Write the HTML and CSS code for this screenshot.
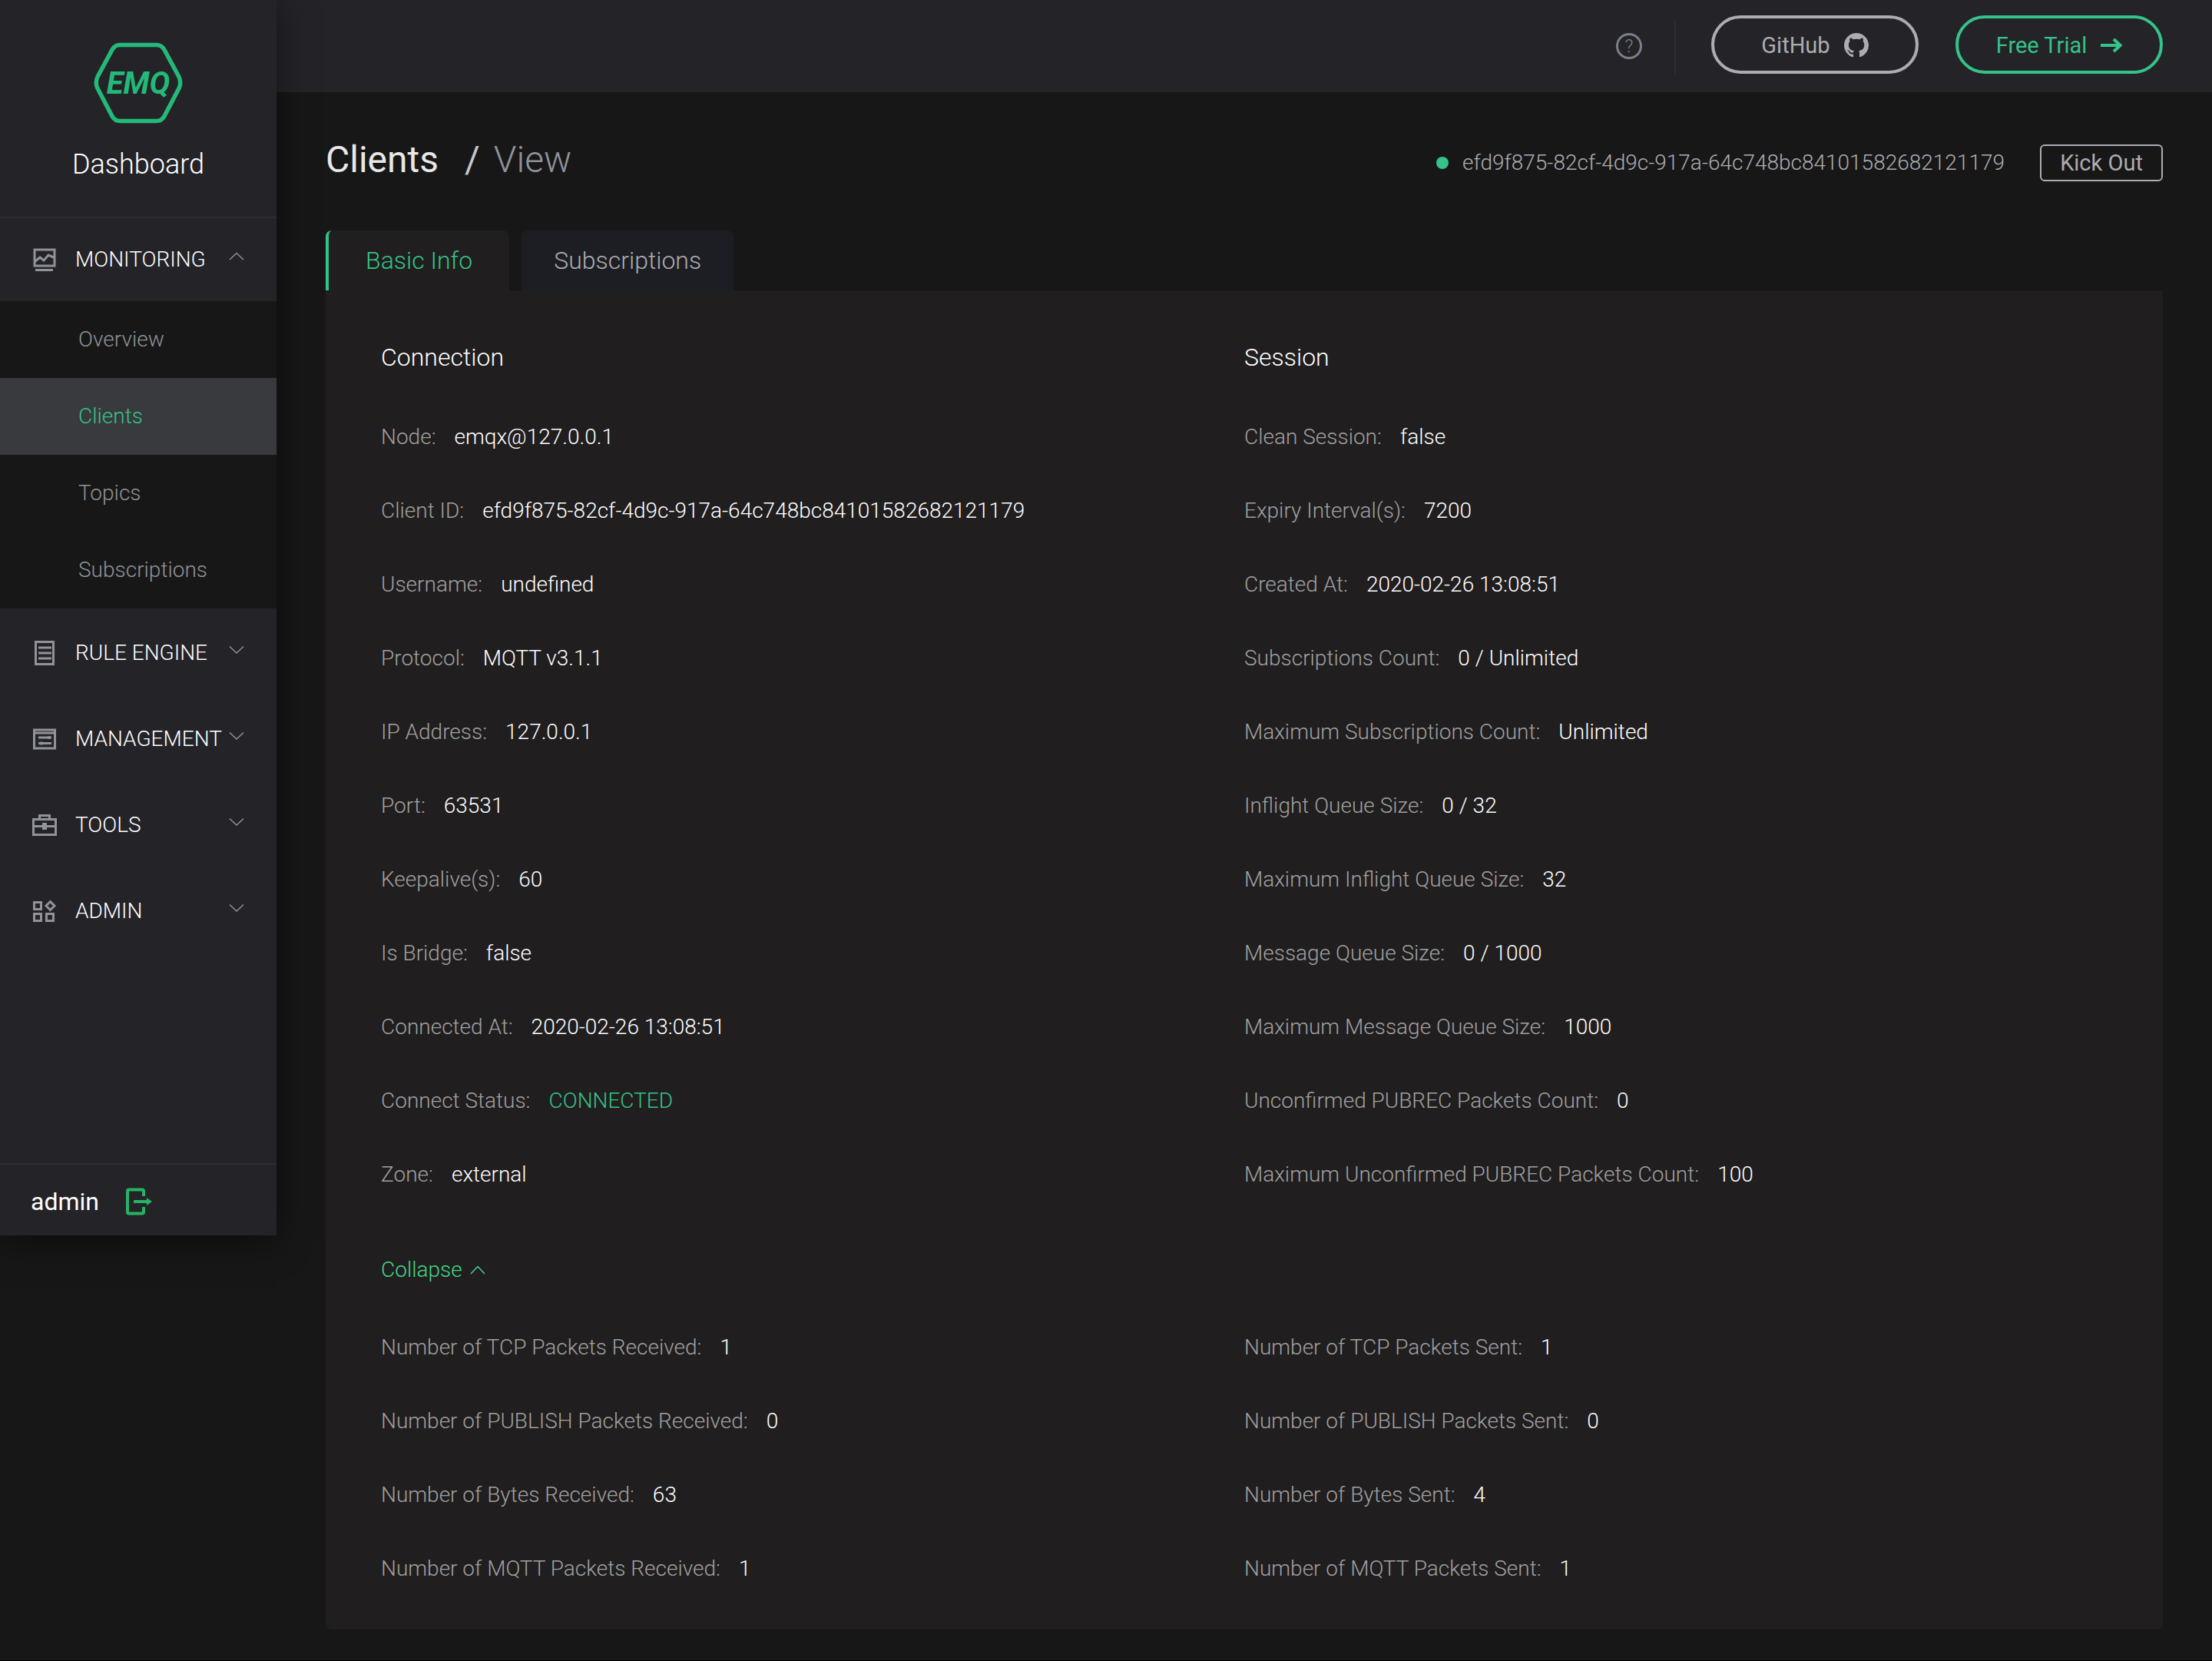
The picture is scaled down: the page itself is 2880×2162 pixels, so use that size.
FILE: index.html
```html
<!DOCTYPE html>
<html lang="en">
<head>
  <meta charset="UTF-8" />
  <meta name="viewport" content="width=device-width, initial-scale=1.0" />
  <title>Clients - EMQ Dashboard</title>
  <link rel="stylesheet" href="styles.css">
</head>
<body>

  <aside class="sidebar">
    <div class="brand">
      <svg class="brand-logo" viewBox="0 0 116 106" role="img" aria-label="EMQ">
        <path d="M34 3.500H82Q88 3.500 91.500 9L111 45Q114.500 53 111 60L91.500 97Q88 102.500 82 102.500H34Q28 102.500 24.500 97L5 60Q1.500 53 5 45L24.500 9Q28 3.500 34 3.500Z" fill="none" stroke="#23ba79" stroke-width="5.500" />
        <text x="58" y="67" text-anchor="middle" class="brand-text">EMQ</text>
      </svg>
      <h1>Dashboard</h1>
    </div>

    <nav class="menu">
      <button class="menu-item" aria-expanded="true">
        <svg class="menu-icon" viewBox="0 0 32 32"><path d="M3 3H29V24H3ZM4 18L10 13L15 17L21 10L28 13M4 29.500H27" /></svg>
        <span>MONITORING</span>
        <svg class="chevron" viewBox="0 0 20 12"><path d="M1 10L10 1.500L19 10" /></svg>
      </button>
      <div class="submenu">
        <a href="#">Overview</a>
        <a href="#" class="active">Clients</a>
        <a href="#">Topics</a>
        <a href="#">Subscriptions</a>
      </div>
      <button class="menu-item">
        <svg class="menu-icon" viewBox="0 0 32 32"><path d="M4.500 1.500H27.500V30.500H4.500ZM8 9H25M8 16H25M8 23H25" /></svg>
        <span>RULE ENGINE</span>
        <svg class="chevron" viewBox="0 0 20 12"><path d="M1 1.500L10 10L19 1.500" /></svg>
      </button>
      <button class="menu-item">
        <svg class="menu-icon" viewBox="0 0 32 32"><path d="M2.500 4H29.500V28H2.500ZM4 8H28M8 14H25M22 12V16M8 21.500H25M12 19.500V23.500" /></svg>
        <span>MANAGEMENT</span>
        <svg class="chevron" viewBox="0 0 20 12"><path d="M1 1.500L10 10L19 1.500" /></svg>
      </button>
      <button class="menu-item">
        <svg class="menu-icon" viewBox="0 0 32 32"><path d="M1.500 8.500H30.500V28.500H1.500ZM9.500 8V3.500H22.500V8M2 17.500H30" /><path d="M13 13H19V22H13Z" class="solid" /></svg>
        <span>TOOLS</span>
        <svg class="chevron" viewBox="0 0 20 12"><path d="M1 1.500L10 10L19 1.500" /></svg>
      </button>
      <button class="menu-item">
        <svg class="menu-icon" viewBox="0 0 32 32"><path d="M2.500 4.500H11.500V13.500H2.500ZM2.500 19.500H11.500V28.500H2.500ZM18.500 19.500H27.500V28.500H18.500ZM23.500 3.500L29 9L23.500 14.500L18 9Z" /></svg>
        <span>ADMIN</span>
        <svg class="chevron" viewBox="0 0 20 12"><path d="M1 1.500L10 10L19 1.500" /></svg>
      </button>
    </nav>

    <div class="user">
      <span>admin</span>
      <button class="logout" aria-label="Log out">
        <svg viewBox="0 0 36 36"><path d="M24 11V4.500Q24 2.500 22 2.500H5Q3 2.500 3 4.500V31.500Q3 33.500 5 33.500H22Q24 33.500 24 31.500V25M11 18H29" fill="none" stroke="#27b363" stroke-width="4" /><path d="M28 13L35 18L28 23Z" fill="#27b363" /></svg>
      </button>
    </div>
  </aside>

  <div class="page">
    <header class="topbar">
      <a href="#" class="help" aria-label="Help">?</a>
      <div class="divider"></div>
      <div class="links">
        <a href="#" class="pill">GitHub
          <svg class="github" viewBox="0 0 16 16"><path d="M8 0C3.580 0 0 3.580 0 8c0 3.540 2.290 6.530 5.470 7.590.4.070.55-.17.55-.38 0-.19-.01-.82-.01-1.490-2.010.37-2.530-.49-2.690-.94-.09-.23-.48-.94-.82-1.130-.28-.15-.68-.52-.01-.53.63-.01 1.080.58 1.230.82.72 1.210 1.870.87 2.330.66.07-.52.28-.87.51-1.070-1.780-.2-3.640-.89-3.640-3.950 0-.87.31-1.590.82-2.150-.08-.2-.36-1.020.08-2.120 0 0 .67-.21 2.200.82.64-.18 1.320-.27 2-.27s1.360.09 2 .27c1.530-1.040 2.200-.82 2.200-.82.44 1.100.16 1.920.08 2.120.51.56.82 1.270.82 2.150 0 3.070-1.870 3.750-3.650 3.950.29.25.54.73.54 1.480 0 1.070-.01 1.930-.01 2.200 0 .21.15.46.55.38A8.010 8.010 0 0 0 16 8c0-4.420-3.580-8-8-8z" fill="currentColor" /></svg>
        </a>
        <a href="#" class="pill trial">Free Trial
          <svg class="arrow" viewBox="0 0 28 20"><path d="M0 10H25M17 2L25.500 10L17 18" /></svg>
        </a>
      </div>
    </header>

    <main>
      <div class="page-head">
        <div class="crumbs"><a href="#">Clients</a><span class="slash">/</span><span class="current">View</span></div>
        <div class="client">
          <span class="dot"></span>
          <span>efd9f875-82cf-4d9c-917a-64c748bc84101582682121179</span>
          <button class="kick">Kick Out</button>
        </div>
      </div>

      <div class="tabs">
        <button class="tab active">Basic Info</button>
        <button class="tab">Subscriptions</button>
      </div>

      <section class="panel">
        <div class="columns">
          <div>
            <h2>Connection</h2>
            <dl>
              <div><dt>Node:</dt><dd>emqx@127.0.0.1</dd></div>
              <div><dt>Client ID:</dt><dd>efd9f875-82cf-4d9c-917a-64c748bc84101582682121179</dd></div>
              <div><dt>Username:</dt><dd>undefined</dd></div>
              <div><dt>Protocol:</dt><dd>MQTT v3.1.1</dd></div>
              <div><dt>IP Address:</dt><dd>127.0.0.1</dd></div>
              <div><dt>Port:</dt><dd>63531</dd></div>
              <div><dt>Keepalive(s):</dt><dd>60</dd></div>
              <div><dt>Is Bridge:</dt><dd>false</dd></div>
              <div><dt>Connected At:</dt><dd>2020-02-26 13:08:51</dd></div>
              <div><dt>Connect Status:</dt><dd class="connected">CONNECTED</dd></div>
              <div><dt>Zone:</dt><dd>external</dd></div>
            </dl>
          </div>
          <div>
            <h2>Session</h2>
            <dl>
              <div><dt>Clean Session:</dt><dd>false</dd></div>
              <div><dt>Expiry Interval(s):</dt><dd>7200</dd></div>
              <div><dt>Created At:</dt><dd>2020-02-26 13:08:51</dd></div>
              <div><dt>Subscriptions Count:</dt><dd>0 / Unlimited</dd></div>
              <div><dt>Maximum Subscriptions Count:</dt><dd>Unlimited</dd></div>
              <div><dt>Inflight Queue Size:</dt><dd>0 / 32</dd></div>
              <div><dt>Maximum Inflight Queue Size:</dt><dd>32</dd></div>
              <div><dt>Message Queue Size:</dt><dd>0 / 1000</dd></div>
              <div><dt>Maximum Message Queue Size:</dt><dd>1000</dd></div>
              <div><dt>Unconfirmed PUBREC Packets Count:</dt><dd>0</dd></div>
              <div><dt>Maximum Unconfirmed PUBREC Packets Count:</dt><dd>100</dd></div>
            </dl>
          </div>
        </div>

        <button class="collapse">Collapse
          <svg class="chevron" viewBox="0 0 20 12"><path d="M1 11L10 1.500L19 11" /></svg>
        </button>

        <div class="columns">
          <dl>
            <div><dt>Number of TCP Packets Received:</dt><dd>1</dd></div>
            <div><dt>Number of PUBLISH Packets Received:</dt><dd>0</dd></div>
            <div><dt>Number of Bytes Received:</dt><dd>63</dd></div>
            <div><dt>Number of MQTT Packets Received:</dt><dd>1</dd></div>
          </dl>
          <dl>
            <div><dt>Number of TCP Packets Sent:</dt><dd>1</dd></div>
            <div><dt>Number of PUBLISH Packets Sent:</dt><dd>0</dd></div>
            <div><dt>Number of Bytes Sent:</dt><dd>4</dd></div>
            <div><dt>Number of MQTT Packets Sent:</dt><dd>1</dd></div>
          </dl>
        </div>
      </section>
    </main>
  </div>

</body>
</html>
```
FILE: styles.css
```css
* {
  box-sizing: border-box;
}

body {
  margin: 0;
  min-height: 100vh;
  display: flex;
  align-items: flex-start;
  background-color: #171717;
  border-bottom: 1px solid #000;
  color: #fff;
  font-family: Roboto, sans-serif;
  font-size: 28px;
  line-height: 36px;
  font-weight: 300;
}

a {
  color: inherit;
  text-decoration: none;
}

button {
  padding: 0;
  border: none;
  background: none;
  color: inherit;
  font: inherit;
  cursor: pointer;
}

svg {
  display: block;
  flex-shrink: 0;
}

/* sidebar */
.sidebar {
  z-index: 1;
  flex: 0 0 360px;
  min-height: 1608px;
  display: flex;
  flex-direction: column;
  background-color: #242328;
  box-shadow: 0 8px 40px rgba(0, 0, 0, 0.5);
}

.brand {
  height: 284px;
  padding-top: 55px;
  display: flex;
  flex-direction: column;
  align-items: center;
  border-bottom: 2px solid #2d2c31;
}

.brand-logo {
  width: 116px;
  height: 106px;
}

.brand-text {
  fill: #23ba79;
  font-size: 40px;
  font-weight: 700;
  font-style: italic;
}

.brand h1 {
  margin: 30px 0 0;
  font-size: 36px;
  line-height: 46px;
  font-weight: 300;
}

.menu {
  flex: 1;
}

.menu-item {
  width: 100%;
  height: 108px;
  margin-bottom: 4px;
  padding: 0 42px;
  display: flex;
  align-items: center;
  gap: 24px;
  white-space: nowrap;
}

.menu-item[aria-expanded="true"] {
  margin-bottom: 0;
}

.menu-item span {
  flex: 1;
  width: 0;
  text-align: left;
}

.menu-icon {
  width: 32px;
  height: 32px;
  fill: none;
  stroke: #909399;
  stroke-width: 3;
}

.menu-icon .solid {
  fill: #909399;
  stroke: none;
}

.chevron {
  width: 20px;
  height: 12px;
  fill: none;
  stroke: #909399;
  stroke-width: 1.5;
}

.menu-item .chevron {
  margin-bottom: 8px;
}

.submenu {
  margin-bottom: 4px;
  background-color: #171717;
  color: #909399;
}

.submenu a {
  display: block;
  padding-left: 102px;
  line-height: 100px;
}

.submenu .active {
  background-color: #393a3e;
  color: #34c388;
}

.user {
  height: 94px;
  padding: 4px 0 0 40px;
  display: flex;
  align-items: center;
  gap: 34px;
  border-top: 2px solid #2d2c31;
  font-size: 32px;
  font-weight: 400;
}

.logout svg {
  width: 36px;
  height: 36px;
}

/* top bar */
.page {
  flex: 1;
}

.topbar {
  height: 120px;
  padding: 0 64px;
  display: flex;
  align-items: center;
  justify-content: flex-end;
  background-color: #242328;
}

.help {
  width: 34px;
  height: 34px;
  border: 3px solid #7c7e89;
  border-radius: 50%;
  color: #7c7e89;
  font-size: 24px;
  line-height: 28px;
  text-align: center;
}

.divider {
  width: 2px;
  height: 70px;
  margin: 4px 46px 0 42px;
  background-color: #2d2c31;
}

.links {
  margin-bottom: 4px;
  display: flex;
  gap: 48px;
}

.pill {
  width: 270px;
  height: 76px;
  padding-top: 2px;
  display: flex;
  align-items: center;
  justify-content: center;
  gap: 18px;
  border: 4px solid #acadb2;
  border-radius: 38px;
  color: #acadb2;
  font-size: 29px;
  font-weight: 400;
}

.trial {
  border-color: #34c388;
  color: #34c388;
}

.github {
  width: 32px;
  height: 32px;
}

.arrow {
  width: 28px;
  height: 20px;
  fill: none;
  stroke: currentColor;
  stroke-width: 4;
}

/* content */
main {
  padding: 60px 64px 40px;
}

.page-head {
  height: 120px;
  display: flex;
  justify-content: space-between;
  align-items: flex-start;
}

.crumbs {
  display: flex;
  color: #e8e8e8;
  font-size: 48px;
  line-height: 56px;
  font-weight: 400;
}

.slash {
  margin: 0 18px 0 34px;
  color: #c4c6cc;
}

.current {
  color: #909399;
  font-weight: 300;
}

.client {
  padding-top: 8px;
  display: flex;
  align-items: center;
  color: #acadb2;
}

.dot {
  width: 16px;
  height: 16px;
  margin-right: 18px;
  border-radius: 50%;
  background-color: #34c388;
}

.kick {
  width: 160px;
  height: 48px;
  margin-left: 46px;
  border: 2px solid #acadb2;
  border-radius: 6px;
  font-size: 29px;
  font-weight: 400;
}

.tabs {
  display: flex;
  gap: 16px;
}

.tab {
  height: 78px;
  padding: 0 42px;
  border-radius: 8px 8px 0 0;
  background-color: #1d1e23;
  color: #acadb2;
  font-size: 32px;
}

.tab.active {
  padding: 0 48px;
  border-left: 4px solid #34c388;
  background-color: #201e1f;
  color: #34c388;
}

.panel {
  padding: 64px 72px 31px;
  border-radius: 0 0 8px 8px;
  background-color: #201e1f;
}

.columns {
  display: grid;
  grid-template-columns: 1fr 1fr;
}

h2 {
  margin: 0 0 33px;
  font-size: 32px;
  line-height: 46px;
  font-weight: 300;
}

dl {
  margin: 0;
}

dl div {
  display: flex;
  gap: 24px;
  line-height: 96px;
}

dt {
  color: #a0a0a0;
}

dd {
  margin: 0;
}

dd.connected {
  color: #34c388;
}

.collapse {
  height: 36px;
  margin: 58px 0 35px;
  display: flex;
  align-items: center;
  gap: 10px;
  color: #42d885;
}

.collapse .chevron {
  stroke: #42d885;
}
```
